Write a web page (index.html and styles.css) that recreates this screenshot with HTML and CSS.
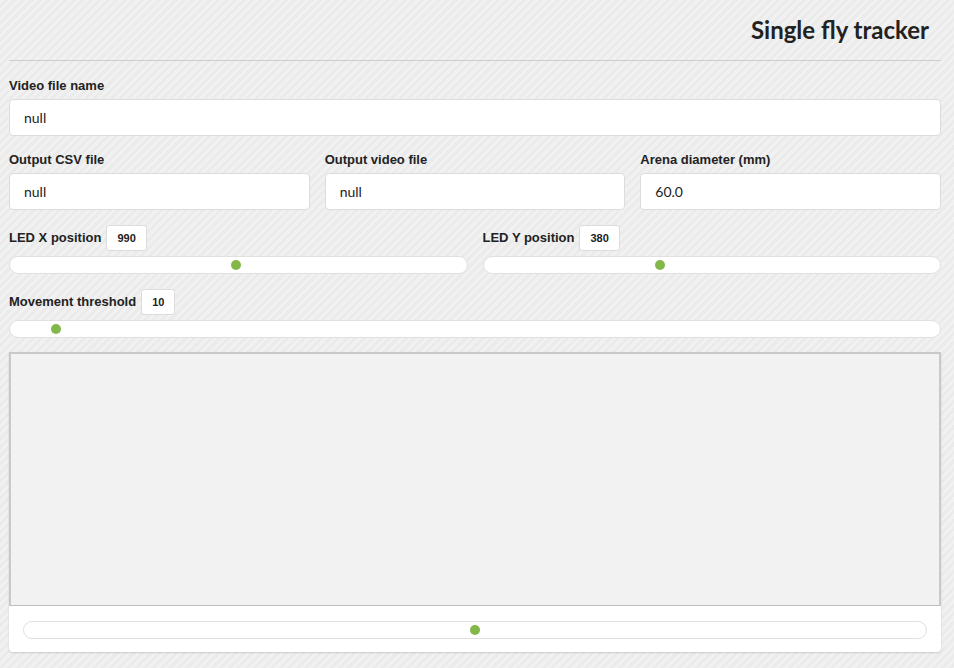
FILE: index.html
```html
<!DOCTYPE html>
<html>
<head>
<meta charset="utf-8">
<link rel="stylesheet" href="styles.css">
</head>
<body>
<div class="page">
  <header class="header">
    <h1 class="title">Single fly tracker</h1>
  </header>

  <div class="field">
    <label class="label">Video file name</label>
    <div class="input">null</div>
  </div>

  <div class="grid3">
    <div class="field">
      <label class="label">Output CSV file</label>
      <div class="input">null</div>
    </div>
    <div class="field">
      <label class="label">Output video file</label>
      <div class="input">null</div>
    </div>
    <div class="field">
      <label class="label">Arena diameter (mm)</label>
      <div class="input">60.0</div>
    </div>
  </div>

  <div class="grid2">
    <div class="slider-field">
      <div class="slider-head"><span class="label">LED X position</span><span class="badge">990</span></div>
      <div class="track"><span class="thumb" style="left:49.6%"></span></div>
    </div>
    <div class="slider-field">
      <div class="slider-head"><span class="label">LED Y position</span><span class="badge">380</span></div>
      <div class="track"><span class="thumb" style="left:38.6%"></span></div>
    </div>
  </div>

  <div class="slider-field slider-solo">
    <div class="slider-head"><span class="label">Movement threshold</span><span class="badge">10</span></div>
    <div class="track"><span class="thumb" style="left:4.9%"></span></div>
  </div>

  <div class="viewer">
    <div class="canvas"></div>
    <div class="viewer-foot">
      <div class="track"><span class="thumb" style="left:50%"></span></div>
    </div>
  </div>
</div>
</body>
</html>
```

FILE: styles.css
```css
* { box-sizing: border-box; }
html, body { margin: 0; padding: 0; }
body {
  width: 954px;
  height: 668px;
  overflow: hidden;
  font-family: "Liberation Sans", Arial, sans-serif;
  color: #222;
  background-color: #efefef;
  background-image: repeating-linear-gradient(135deg, #f1f1f1 0px, #f1f1f1 3px, #ebebeb 3px, #ebebeb 6px);
}
.page {
  width: 932px;
  margin-left: 9px;
}
.header {
  height: 61px;
  border-bottom: 1px solid #cdcdcd;
  display: flex;
  justify-content: flex-end;
  align-items: center;
  padding-right: 12px;
}
.title {
  margin: 0;
  font-family: Lato, "Liberation Sans", sans-serif;
  font-weight: 700;
  font-size: 24px;
  color: #222;
  padding-bottom: 1px;
}
.field { margin-top: 16px; }
.grid3 .field { margin-top: 15px; }
.label {
  display: block;
  font-weight: 700;
  font-size: 13px;
  line-height: 18px;
  color: #222;
  margin-bottom: 4px;
}
.input {
  height: 37px;
  background: #fff;
  border: 1px solid #dcdcdc;
  border-radius: 4px;
  padding: 0 14px;
  font-family: Lato, "Liberation Sans", sans-serif;
  font-size: 14px;
  line-height: 35px;
  color: #222;
}
.grid3 {
  display: grid;
  grid-template-columns: 1fr 1fr 1fr;
  column-gap: 15px;
}
.grid2 {
  display: grid;
  grid-template-columns: 1fr 1fr;
  column-gap: 15px;
}
.slider-field { margin-top: 15px; }
.slider-solo { margin-top: 15px; }
.slider-head {
  display: flex;
  align-items: center;
  gap: 5px;
  height: 26px;
  margin-bottom: 5px;
}
.slider-head .label { margin: 0; display: inline; }
.badge {
  display: inline-block;
  height: 26px;
  line-height: 24px;
  padding: 0 10px;
  background: #fff;
  border: 1px solid #dcdcdc;
  border-radius: 3px;
  font-weight: 700;
  font-size: 11px;
  color: #222;
}
.track {
  position: relative;
  height: 18px;
  background: #fff;
  border: 1px solid #e0e0e0;
  border-radius: 9px;
}
.thumb {
  position: absolute;
  top: 3px;
  width: 10px;
  height: 10px;
  margin-left: -5px;
  border-radius: 50%;
  background: #84b74a;
}
.viewer {
  margin-top: 14px;
  background: #fff;
  border-radius: 0 0 4px 4px;
  box-shadow: 0 1px 2px rgba(0,0,0,0.15);
}
.canvas {
  height: 254px;
  background: #f2f2f2;
  border: 2px solid #c9c9c9;
  border-bottom-width: 1px;
  border-bottom-color: #bdbdbd;
}
.viewer-foot {
  padding: 15px 14px 13px 14px;
}
```
